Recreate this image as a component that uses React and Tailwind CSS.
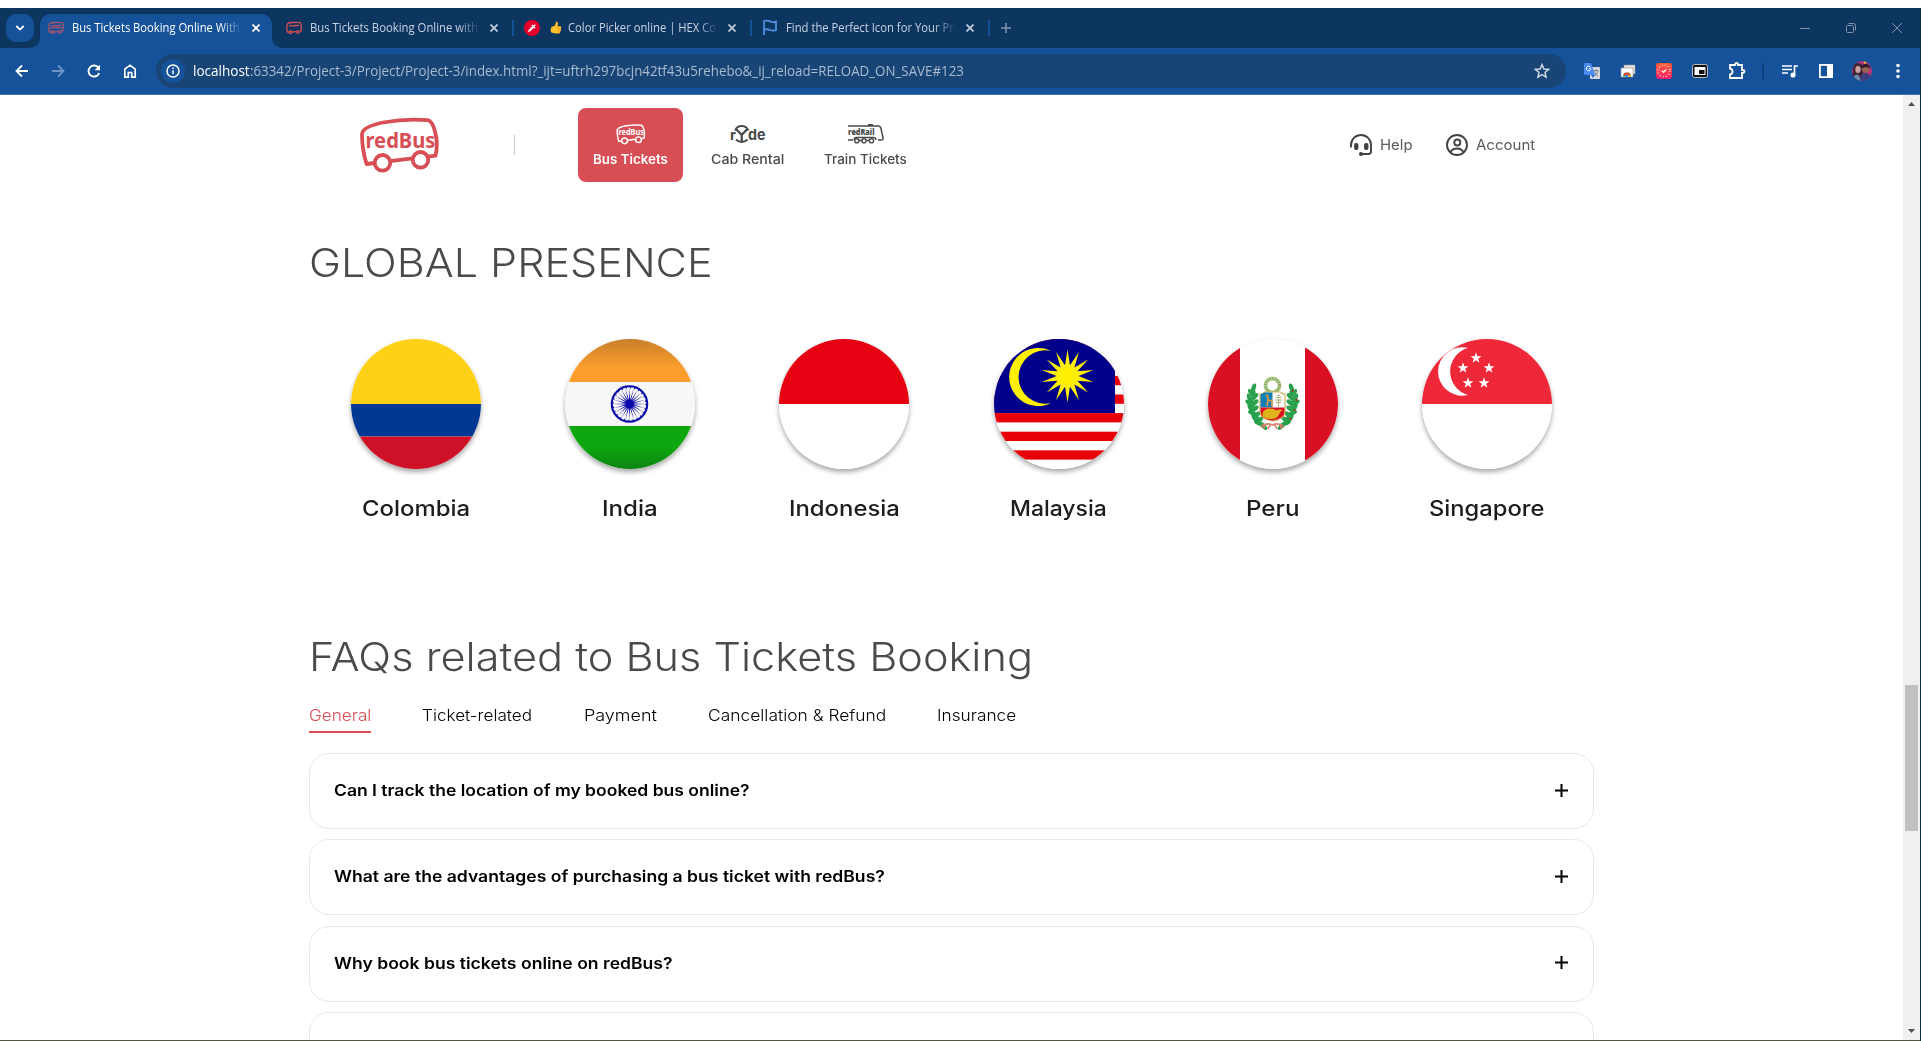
import { useLayoutEffect, useRef, useState } from "react";

/* One line of text condensed or widened to occupy a given width. */
function Fit({ w, className = "", children }) {
  const ref = useRef(null);
  const [scale, setScale] = useState(1);
  useLayoutEffect(() => {
    const measure = () => {
      if (ref.current) setScale(w / ref.current.offsetWidth);
    };
    measure();
    document.fonts?.ready.then(measure);
  }, [w]);
  return (
    <span className={"block shrink-0 " + className} style={{ width: w }}>
      <span
        ref={ref}
        className="inline-block origin-left whitespace-nowrap"
        style={{ transform: `scaleX(${scale})` }}
      >
        {children}
      </span>
    </span>
  );
}

/* ---------- Browser chrome ---------- */

function BusFavicon({ dim }) {
  return (
    <svg width="16" height="16" viewBox="0 0 16 16" fill="none" stroke={dim ? "#a9536c" : "#d84e55"} strokeWidth="1.3">
      <path d="M3 12H1.4C.8 9.500.7 7.200 1 4.900 1.300 3.200 3 2.600 6 2.500L13 2.400c1.300 0 1.900.8 2.100 2.200.3 2.400.1 4.800-.6 7L13.600 11.500M6 12l4-.3" />
      <path d="M3 5.800 13 5.500" />
      {dim && <path d="M2.500 7.800 14 7.600" />}
      <circle cx="4.500" cy="12.300" r="1.300" />
      <circle cx="11.800" cy="11.900" r="1.300" />
    </svg>
  );
}

function CloseX({ color = "#fff" }) {
  return (
    <svg width="8" height="8" viewBox="0 0 8 8" stroke={color} strokeWidth="1.700">
      <path d="M.5.5l7 7M7.500.5l-7 7" />
    </svg>
  );
}

function TabTitle({ w, active, children }) {
  return (
    <div
      className={
        "h-5 shrink-0 text-[12px] leading-5 [mask-image:linear-gradient(to_right,#000_88%,rgba(0,0,0,0.1))] " +
        (active ? "text-white" : "text-[#c9d4e0]")
      }
    >
      <Fit w={w}>{children}</Fit>
    </div>
  );
}

function TabStrip() {
  return (
    <div className="flex h-10 bg-[#0c3560] pl-1.5">
      <div className="mt-1.5 flex h-7 w-7 shrink-0 items-center justify-center rounded-[10px] bg-[#15529a]">
        <svg width="10" height="6" viewBox="0 0 10 6" fill="none" stroke="#fff" strokeWidth="1.800">
          <path d="M1.300 1 5 4.600 8.700 1" />
        </svg>
      </div>
      <div className="relative mt-1.5 ml-1.5 flex h-[34px] w-[232px] shrink-0 items-start rounded-t-[10px] bg-[#15529a] pl-2">
        <svg className="absolute bottom-0 -left-[10px]" width="10" height="10" viewBox="0 0 10 10" fill="#15529a">
          <path d="M10 0v10H0A10 10 0 0 0 10 0z" />
        </svg>
        <svg className="absolute -right-[10px] bottom-0" width="10" height="10" viewBox="0 0 10 10" fill="#15529a">
          <path d="M0 0v10h10A10 10 0 0 1 0 0z" />
        </svg>
        <div className="flex h-7 items-center">
          <BusFavicon dim />
          <div className="w-2" />
          <TabTitle w={168} active>Bus Tickets Booking Online With</TabTitle>
          <div className="w-3" />
          <CloseX />
        </div>
      </div>
      <div className="mt-1.5 flex h-7 items-center pl-[14px]">
        <BusFavicon />
        <div className="w-2" />
        <TabTitle w={168}>Bus Tickets Booking Online with</TabTitle>
        <div className="w-3" />
        <CloseX color="#c3cfdc" />
        <div className="ml-[14px] h-4 w-0.5 bg-[#15529a]" />
        <svg className="ml-[10px]" width="16" height="16" viewBox="0 0 16 16">
          <circle cx="8" cy="8" r="8" fill="#e4002b" />
          <path d="M4 12l.8-2.300L8.200 6.300l1.500 1.500L6.300 11.200z" fill="#fff" />
          <path d="M7.800 5l3.200 3.200M9.500 6.500 11.300 4.700" stroke="#fff" strokeWidth="1.500" />
        </svg>
        <svg className="ml-[10px]" width="12" height="14" viewBox="0 0 12 14">
          <path d="M1.500 6 5 4.500 6 .9c1.500-.6 2.200.5 1.900 2L7.500 5.200h2.700c1.300.3 1.200 1.500.6 2 .6.7.4 1.400-.2 1.800.4.800.1 1.400-.5 1.700.2.900-.3 1.600-1.200 1.700H5L1.300 11.500C.4 9.800.5 7.500 1.500 6z" fill="#fdc02f" />
          <path d="M7.300 7.300h3M7.300 9.100h3M7.100 10.900h2.700" stroke="#e59600" strokeWidth=".6" />
        </svg>
        <div className="w-[6px]" />
        <TabTitle w={148}>Color Picker online | HEX Co</TabTitle>
        <div className="w-3" />
        <CloseX color="#c3cfdc" />
        <div className="ml-[14px] h-4 w-0.5 bg-[#15529a]" />
        <svg className="-mt-[2px] ml-[10px]" width="16" height="16" viewBox="0 0 16 16" fill="none" stroke="#4f8fdf" strokeWidth="1.800">
          <path d="M2 16V2c2-.6 4-.4 6 .4s4 .9 6 .2v8.600c-2 .7-4 .6-6-.2s-4-1-6-.4" />
        </svg>
        <div className="w-2" />
        <TabTitle w={168}>Find the Perfect Icon for Your Pr</TabTitle>
        <div className="w-3" />
        <CloseX color="#c3cfdc" />
        <div className="ml-[14px] h-4 w-0.5 bg-[#15529a]" />
        <svg className="ml-[11px]" width="10" height="10" viewBox="0 0 10 10" stroke="#7e92aa" strokeWidth="1.600">
          <path d="M5 0v10M0 5h10" />
        </svg>
      </div>
      <div className="mr-[18px] ml-auto flex h-10 items-center gap-9 text-[#8194ab]">
        <svg width="10" height="10" viewBox="0 0 10 10" stroke="currentColor"><path d="M0 5.500h10" /></svg>
        <svg width="10" height="10" viewBox="0 0 10 10" fill="none" stroke="currentColor">
          <rect x=".5" y="2.500" width="7" height="7" rx="1" />
          <path d="M2.500.5H7.500Q9.500.5 9.500 2.500V7.500" />
        </svg>
        <svg width="10" height="10" viewBox="0 0 10 10" stroke="currentColor"><path d="M0 0l10 10M10 0 0 10" /></svg>
      </div>
    </div>
  );
}

function Toolbar() {
  return (
    <div className="flex h-[47px] items-center border-b border-[#3f74b8] bg-[#15529a] pl-[15px] text-white">
      <svg width="14" height="14" viewBox="0 0 14 14" fill="none" stroke="#fff" strokeWidth="1.800"><path d="M13 7H2M7 1.500 1.500 7 7 12.500" /></svg>
      <svg className="ml-[22px]" width="14" height="14" viewBox="0 0 14 14" fill="none" stroke="#6f96c6" strokeWidth="1.800"><path d="M1 7h11M7 1.500 12.500 7 7 12.500" /></svg>
      <svg className="ml-[22px]" width="14" height="14" viewBox="0 0 14 14" fill="none" stroke="#fff" strokeWidth="1.900"><path d="M12.200 9A5.500 5.500 0 1 1 11.500 3.800" /><path d="M13 .8v5.400H7.600L13 .8z" fill="#fff" stroke="none" /></svg>
      <svg className="ml-[22px]" width="14" height="14" viewBox="0 0 14 14" fill="none" stroke="#fff" strokeWidth="1.700"><path d="M1.800 5.200 7 1.200l5.200 4v8H8.700V8.500H5.300v4.700H1.800z" /></svg>
      <div className="ml-[19px] flex h-[34px] w-[1410px] items-center rounded-full bg-[#194576] pl-[5px]">
        <div className="flex h-6 w-6 items-center justify-center rounded-full bg-[#15529a]">
          <svg width="14" height="14" viewBox="0 0 14 14" fill="none" stroke="#fff" strokeWidth="1.500"><circle cx="7" cy="7" r="6" /><path d="M7 6.200v4M7 3.600v1.500" /></svg>
        </div>
        <div className="ml-2 flex text-[14px] leading-5">
          <Fit w={57}>localhost</Fit>
          <Fit w={714} className="text-[#a9bbd0]">:63342/Project-3/Project/Project-3/index.html?_ijt=uftrh297bcjn42tf43u5rehebo&_ij_reload=RELOAD_ON_SAVE#123</Fit>
        </div>
        <svg className="mr-4 ml-auto" width="16" height="16" viewBox="0 0 16 16" fill="none" stroke="#cbd6e2" strokeWidth="1.500"><path d="M8 1.600 9.900 6l4.700.4-3.600 3.100 1.100 4.600L8 11.700l-4.100 2.400L5 9.500 1.400 6.400 6.100 6z" /></svg>
      </div>
      <svg className="ml-[18px]" width="16" height="16" viewBox="0 0 16 16">
        <rect x="6" y="4" width="10" height="12" rx="1" fill="#d5d8dc" />
        <path d="M0 1q0-1 1-1h6l4 12H1q-1 0-1-1z" fill="#4a8af4" />
        <path d="M7 12h4l-2 3z" fill="#3367d6" />
        <path d="M6.800 5.700H4.900M6.600 4.300a2.300 2.300 0 1 0 .3 1.500" stroke="#fff" fill="none" />
        <path d="M9.500 7.500h5M12 6.500v1M10.500 8c1 3 2 4 3.500 5M14 8c-.5 2-1.500 3.500-3 4.500" stroke="#768493" fill="none" />
      </svg>
      <svg className="ml-5" width="16" height="16" viewBox="0 0 16 16">
        <rect x="4" y="2" width="11" height="9" fill="#e4e4e4" stroke="#999" strokeWidth=".6" />
        <rect x="1" y="5" width="12" height="9" fill="#fff" stroke="#888" strokeWidth=".6" />
        <path d="M3 13.500a4 4 0 0 1 8 0z" fill="#2ba24c" />
        <path d="M3.300 12A4 4 0 0 1 10.700 12L7 13z" fill="#ea4335" />
        <path d="M8 12h2.700q.3.800.3 1.500H8z" fill="#fbbc05" />
        <circle cx="7" cy="13" r="1.300" fill="#4285f4" />
      </svg>
      <div className="ml-5 flex h-4 w-4 items-center justify-center rounded-[3px] bg-gradient-to-b from-[#ff5a2c] to-[#fa1768]">
        <svg width="16" height="16" viewBox="0 0 16 16" fill="none" stroke="#fff"><circle cx="8" cy="8" r="6" strokeWidth="1.200" strokeDasharray="1 2.140" /><path d="M5.800 7.800 7.400 9.300 10.400 6.500" strokeWidth="1.200" /></svg>
      </div>
      <svg className="ml-5" width="16" height="16" viewBox="0 0 16 16">
        <rect x=".5" y="1.500" width="15" height="13" rx="2" fill="#111" stroke="#ddd" strokeWidth=".8" /><rect x="2.500" y="4" width="11" height="8" fill="#fff" /><rect x="7" y="7" width="5.500" height="4" fill="#111" />
      </svg>
      <svg className="ml-5" width="18" height="18" viewBox="0 0 18 18" fill="none" stroke="#fff" strokeWidth="1.800"><path d="M2 3h5Q7 1 8.500 1T10 3h4v5q2.500 0 2.500 1.500T14 11v5H2v-3.500Q4.500 12 4.500 9.500T2 6.500z" /></svg>
      <div className="ml-4 h-4 w-0.5 bg-[#0c3f7c]" />
      <svg className="ml-[18px]" width="16" height="14" viewBox="0 0 16 14" fill="none" stroke="#fff" strokeWidth="1.700"><path d="M0 2h10M0 5.500h10M0 9h6M12.500 11V2H16" /><circle cx="11" cy="11" r="1.700" fill="#fff" /></svg>
      <svg className="ml-5" width="16" height="16" viewBox="0 0 16 16"><rect x="1.900" y="1.900" width="12.200" height="12.200" fill="none" stroke="#fff" strokeWidth="1.800" /><path d="M9 1h6v14H9z" fill="#fff" /></svg>
      <svg className="ml-[18px] rounded-full" width="20" height="20" viewBox="0 0 20 20">
        <rect width="20" height="20" fill="#b4347c" />
        <path d="M1 20V8q0-6 5-6t5 6v8z" fill="#3a2436" />
        <ellipse cx="6" cy="8.500" rx="2.700" ry="3.600" fill="#d0a0a0" />
        <path d="M1 20q0-7 5-6.500l4 6.500z" fill="#6b8fa8" />
        <circle cx="13.500" cy="8" r="3.700" fill="#9c6250" />
        <path d="M9.500 7.500Q9 3.200 13.500 3t4.500 4.500Q14 4.500 9.500 7.500z" fill="#2b1d33" />
        <path d="M8 20q0-8.500 5.500-8T20 20z" fill="#3b3f80" />
        <circle cx="13" cy="1.500" r="1.200" fill="#eac22c" />
      </svg>
      <svg className="ml-[24px]" width="4" height="16" viewBox="0 0 4 16" fill="#fff"><circle cx="2" cy="2.500" r="1.800" /><circle cx="2" cy="8" r="1.800" /><circle cx="2" cy="13.500" r="1.800" /></svg>
    </div>
  );
}

/* ---------- Site header ---------- */

function BusLogo({ width, height, color, stroke = 3.4 }) {
  return (
    <svg width={width} height={height} viewBox="0 0 82 57" fill="none" stroke={color} strokeWidth={stroke}>
      <path d="M16 46 7.500 47C4.500 37 3 27 3 17.500 3 11.500 12 8 24 5.500 38 3 54 2 68.500 3.200c3.500.3 5.800 5 7.500 11.300 2.300 8 2.300 16.500.5 24.200L69 39.600M31 44.200l22.500-2.800" strokeLinejoin="round" />
      <circle cx="23.500" cy="45.800" r="7.800" />
      <circle cx="61.500" cy="42.800" r="7.800" />
      <text x="6.500" y="30.500" fontFamily="'Noto Sans', 'Open Sans', sans-serif" fontWeight="700" fontSize="22" textLength="70" lengthAdjust="spacingAndGlyphs" fill={color} stroke="none">redBus</text>
    </svg>
  );
}

function RydeLogo() {
  return (
    <svg width="36" height="20" viewBox="0 0 36 20" fill="none" stroke="#4a4a4a">
      <text x="0" y="16" fontFamily="Inter, sans-serif" fontWeight="700" fontSize="14.500" fill="#4a4a4a" stroke="none">r</text>
      <path d="M5 6.500A7.200 7.200 0 0 1 18.400 6.500M6 15.500a7.800 7.800 0 0 0 11.500 0" strokeWidth="1.900" />
      <path d="M6 5 11.700 10.800 17.500 5M11.700 10.500v8" strokeWidth="2.300" />
      <text x="18" y="16" fontFamily="Inter, sans-serif" fontWeight="700" fontSize="15" textLength="17.500" lengthAdjust="spacingAndGlyphs" fill="#4a4a4a" stroke="none">de</text>
    </svg>
  );
}

function RailLogo() {
  return (
    <svg width="36" height="20" viewBox="0 0 36 20" fill="none" stroke="#4a4a4a" strokeWidth="1.500">
      <path d="M0 1.900h30.500q1.800 0 2.500 2.600L35 14q.3 2-2 2h-3M20 .8h5M0 16h5" />
      <text x="0" y="11" fontFamily="'Open Sans', sans-serif" fontWeight="800" fontSize="8.500" textLength="26.500" lengthAdjust="spacingAndGlyphs" fill="#4a4a4a" stroke="none">redRail</text>
      <path d="M6 16q0-2.500 2.500-2.500h17q2.500 0 2.500 2.500" strokeWidth="1.300" />
      <circle cx="8.800" cy="16.800" r="2.100" strokeWidth="1.400" /><circle cx="16" cy="16.800" r="2.100" strokeWidth="1.400" /><circle cx="23.500" cy="16.800" r="2.100" strokeWidth="1.400" />
      <path d="M11 16.500h3M18 16.500h3" strokeWidth="1.300" />
    </svg>
  );
}

function SiteHeader() {
  return (
    <header className="flex h-[100px] items-center pl-[359px] text-[#4a4a4a]">
      <BusLogo width={82} height={57} color="#d84e55" stroke={3.8} />
      <div className="ml-[73px] h-5 w-px bg-[#c8c8c8]" />
      <div className="ml-[63px] flex h-[74px] w-[105px] flex-col items-center rounded-lg bg-[#d84e55] pt-4 text-[13px] font-semibold text-white">
        <BusLogo width={30} height={21} color="#fff" stroke={4} />
        <Fit w={75} className="mt-1 leading-5">Bus Tickets</Fit>
      </div>
      <div className="flex h-[74px] flex-col items-center pt-4 pl-[28px] text-[13px] font-medium">
        <RydeLogo />
        <Fit w={73} className="mt-[5px] leading-5">Cab Rental</Fit>
      </div>
      <div className="flex h-[74px] flex-col items-center pt-4 pl-[40px] text-[13px] font-medium">
        <RailLogo />
        <Fit w={83} className="mt-[5px] leading-5">Train Tickets</Fit>
      </div>
      <div className="ml-[443px] flex items-center text-[14.5px] text-[#5c5c5c]">
        <svg width="22" height="22" viewBox="0 0 22 22" fill="none" stroke="#424242" strokeWidth="1.900">
          <path d="M1 13.500V11a10 10 0 0 1 20 0v6.500q0 2.500-2.500 2.500H12" />
          <rect x="5" y="10" width="2.500" height="5" rx="1" fill="#424242" /><rect x="15" y="10" width="2.500" height="5" rx="1" fill="#424242" />
          <circle cx="11" cy="20" r="1.300" fill="#424242" strokeWidth="1.400" />
        </svg>
        <Fit w={33} className="ml-2">Help</Fit>
        <svg className="ml-[33px]" width="22" height="22" viewBox="0 0 22 22" fill="none" stroke="#424242" strokeWidth="1.900">
          <circle cx="11" cy="11" r="10" /><circle cx="11.300" cy="8.500" r="3" /><path d="M4.500 18q2-3.500 6.500-3.500t6.500 3.500" />
        </svg>
        <Fit w={59} className="ml-2">Account</Fit>
      </div>
    </header>
  );
}

/* ---------- Flags, each drawn on a 130×130 canvas ---------- */

function starPoints(cx, cy, outer, inner, n) {
  return Array.from({ length: n * 2 }, (_, i) => {
    const r = i % 2 ? inner : outer;
    const a = (Math.PI * i) / n - Math.PI / 2;
    return `${(cx + r * Math.cos(a)).toFixed(2)},${(cy + r * Math.sin(a)).toFixed(2)}`;
  }).join(" ");
}

function Colombia() {
  return (<><rect width="130" height="65" fill="#fed116" /><rect y="65" width="130" height="32.500" fill="#003893" /><rect y="97.500" width="130" height="32.500" fill="#ce1126" /></>);
}

function India() {
  return (
    <>
      <defs>
        <linearGradient id="saffron" x2="0" y2="1"><stop stopColor="#c8802a" /><stop offset=".65" stopColor="#fa9d2c" /></linearGradient>
        <linearGradient id="green" x2="0" y2="1"><stop offset=".5" stopColor="#0da60f" /><stop offset="1" stopColor="#0c8412" /></linearGradient>
      </defs>
      <rect width="130" height="130" fill="#f7f7f7" />
      <rect width="130" height="43" fill="url(#saffron)" />
      <rect y="87" width="130" height="43" fill="url(#green)" />
      <circle cx="64.500" cy="65" r="17.700" fill="none" stroke="#0a0aa8" strokeWidth="2.100" />
      <circle cx="64.500" cy="65" r="16.300" fill="none" stroke="#0a0aa8" strokeWidth="1.200" strokeDasharray="1.200 3.067" />
      <polygon points={starPoints(64.5, 65, 16.5, 4, 24)} fill="#0a0aa8" />
      <circle cx="64.500" cy="65" r="3.400" fill="#0a0aa8" />
    </>
  );
}

function Indonesia() {
  return (<><rect width="130" height="130" fill="#fff" /><rect width="130" height="65" fill="#e70011" /></>);
}

function Malaysia() {
  return (
    <>
      <rect width="130" height="130" fill="#fff" />
      {[0, 2, 4, 6, 8, 10, 12].map((i) => (
        <rect key={i} y={i * 9.3 - 0.3} width="130" height="9.300" fill="#e80008" />
      ))}
      <rect y="121" width="130" height="9" fill="#fff" />
      <rect width="121" height="74" fill="#00008b" />
      <path d="M57 12A29 29 0 1 0 57 64A26.650 26.650 0 1 1 57 12z" fill="#ffef00" />
      <polygon points={starPoints(73.5, 37, 26.5, 11, 14)} fill="#ffef00" />
    </>
  );
}

/* Leaves set along a curve on one side of the Peruvian shield. */
const LEAVES = [[-9, 21, 50], [-14, 18, 25], [-18, 13, 60], [-20, 8, 25], [-22, 3, 60], [-23, -2, 35], [-23, -7, 70], [-21, -12, 50], [-19, -17, 110], [-16, 10, -40], [-18, 4, -35], [-18, -2, -40], [-18, -8, -45], [-13, 15, -40], [-20, 0, 90], [-19, -11, 90], [-15, 14, 60]];

function Peru() {
  const leaves = LEAVES.map(([x, y, a]) => (
    <ellipse key={`${x},${y}`} cx={x} cy={y} rx="4.800" ry="2.200" transform={`rotate(${a} ${x} ${y})`} />
  ));
  return (
    <>
      <rect width="130" height="130" fill="#fff" />
      <rect width="32" height="130" fill="#d91023" />
      <rect x="97" width="33" height="130" fill="#d91023" />
      <g transform="translate(64.500 66)">
        <g fill="#2aa14d">{leaves}<g transform="scale(-1 1)">{leaves}</g></g>
        <g fill="#d91023"><circle cx="20" cy="-14" r=".9" /><circle cx="24" cy="-5" r=".9" /><circle cx="22" cy="5" r=".9" /><circle cx="18" cy="14" r=".9" /></g>
        <circle cx="0" cy="-19.500" r="7" fill="none" stroke="#b5cd8d" strokeWidth="3.800" />
        <circle cx="0" cy="-19.500" r="7" fill="none" stroke="#7fab5c" strokeWidth="3" strokeDasharray="1 1.500" />
        <path d="M-12.500-11Q-9-11-8-13H8q1 2 4.500 2v17q0 8-12.500 10Q-12.500 14-12.500 6z" fill="#fff" stroke="#d3b054" strokeWidth="1.200" />
        <path d="M-12-10.500-8-12.500H0V2.500h-12z" fill="#0d7fae" />
        <path d="M-12 2.500h24V6q0 8-12 9.500Q-12 14-12 6z" fill="#d91023" />
        <path d="M-7-9.500l2 0 .5 5h4V1.500M-4.500-5l-1 6" fill="none" stroke="#dd9a48" strokeWidth="1.600" />
        <path d="M6 1.500v-8M2.500-5h7M3-7.500h6M4.500-9.500h3M3.500-2.500h5" stroke="#b0a878" strokeWidth="1" />
        <path d="M-10 10q0-6 7-6.500 5 0 7 2 4-2 6 .5-3-.5-3 2.500-2 5.500-8 5.500-8 0-9-4z" fill="#e0b21b" />
        <path d="M-12 22q6-5 12-2 6-3 12 2M-7 19l-2 5M7 19l2 5M-2 20l-3 4M2 20l3 4" fill="none" stroke="#dc8069" strokeWidth="1.500" />
      </g>
    </>
  );
}

function Singapore() {
  return (
    <>
      <rect width="130" height="130" fill="#fff" />
      <rect width="130" height="65" fill="#ee2839" />
      <path d="M46 9A24.200 24.200 0 1 0 46 56A24.400 24.400 0 0 1 46 9z" fill="#fff" />
      {[[54, 19], [41, 29], [67, 29], [46, 44], [62, 44]].map(([x, y]) => (
        <polygon key={`${x},${y}`} points={starPoints(x, y, 5.8, 2.3, 5)} fill="#fff" />
      ))}
    </>
  );
}

const COUNTRIES = [
  ["Colombia", 108, Colombia],
  ["India", 56, India],
  ["Indonesia", 111, Indonesia],
  ["Malaysia", 97, Malaysia],
  ["Peru", 54, Peru],
  ["Singapore", 116, Singapore],
];

const TABS = [
  ["General", 62],
  ["Ticket-related", 110.5],
  ["Payment", 73],
  ["Cancellation & Refund", 178.5],
  ["Insurance", 79],
];

/* The last card is only partly in view: its text lies below the fold. */
const QUESTIONS = [
  ["Can I track the location of my booked bus online?", 416],
  ["What are the advantages of purchasing a bus ticket with redBus?", 551],
  ["Why book bus tickets online on redBus?", 339],
  null,
];

function ScrollBar() {
  return (
    <div className="flex w-[17px] shrink-0 flex-col items-center bg-[#f0f0f0] text-[#505050]">
      <svg className="mt-[7px]" width="7" height="4" viewBox="0 0 7 4" fill="currentColor"><path d="M0 4 3.500 0 7 4z" /></svg>
      <div className="mt-[579px] h-[146px] w-[13px] bg-[#c1c1c1]" />
      <svg className="mt-auto mb-[7px]" width="7" height="4" viewBox="0 0 7 4" fill="currentColor"><path d="M0 0l3.500 4L7 0z" /></svg>
    </div>
  );
}

export default function App() {
  return (
    <div className="flex h-[1041px] w-[1921px] flex-col overflow-hidden bg-white font-['Inter',sans-serif]">
      <div className="h-2 shrink-0" />
      <div className="flex min-h-0 flex-1 border-r border-[#0b2a40]">
        <div className="flex w-[1920px] flex-col">
          <div className="shrink-0 font-['Open_Sans',sans-serif]">
            <TabStrip />
            <Toolbar />
          </div>
          <div className="flex min-h-0 flex-1 border-b border-[#4d5640]">
            <main className="w-[1903px] shrink-0 overflow-hidden">
              <SiteHeader />
              <div className="ml-[309px] w-[1285px]">
                <h2 className="mt-[38px] h-[60px] text-[39px] leading-[60px] font-light text-[#4a4a4a]">
                  <Fit w={404}>GLOBAL PRESENCE</Fit>
                </h2>
                <div className="mt-[46px] grid grid-cols-6">
                  {COUNTRIES.map(([name, w, Flag]) => (
                    <div key={name} className="flex flex-col items-center">
                      <div className="h-[130px] w-[130px] overflow-hidden rounded-full shadow-[0_3px_5px_rgba(0,0,0,0.35)]">
                        <svg width="130" height="130" viewBox="0 0 130 130"><Flag /></svg>
                      </div>
                      <Fit w={w} className="mt-[24px] text-[21.5px] leading-[30px] font-medium text-[#1d1d1d]">{name}</Fit>
                    </div>
                  ))}
                </div>
                <h2 className="mt-[104px] h-[60px] text-[39px] leading-[60px] font-light text-[#4a4a4a]">
                  <Fit w={724}>FAQs related to Bus Tickets Booking</Fit>
                </h2>
                <div className="mt-[13px] flex gap-[51px] text-[15.5px] leading-6 font-light text-black">
                  {TABS.map(([name, w], i) => (
                    <div key={name} className={i === 0 ? "h-[33px] border-b-2 border-[#d84e55] pt-1 text-[#d84e55]" : "h-[33px] pt-1"}>
                      <Fit w={w}>{name}</Fit>
                    </div>
                  ))}
                </div>
                <div className="mt-5 flex flex-col gap-[10.4px]">
                  {QUESTIONS.map((item, i) => (
                    <div key={i} className="flex h-[76px] shrink-0 items-center justify-between rounded-[20px] border border-[#e9e9e9] pr-[25px] pl-6 text-[15.5px] font-semibold text-black">
                      {item && <Fit w={item[1]} className="-mt-px">{item[0]}</Fit>}
                      {item && (
                        <svg className="-mt-[2px]" width="13" height="13" viewBox="0 0 13 13" stroke="#000" strokeWidth="2"><path d="M6.500 0v13M0 6.500h13" /></svg>
                      )}
                    </div>
                  ))}
                </div>
              </div>
            </main>
            <ScrollBar />
          </div>
        </div>
      </div>
    </div>
  );
}
